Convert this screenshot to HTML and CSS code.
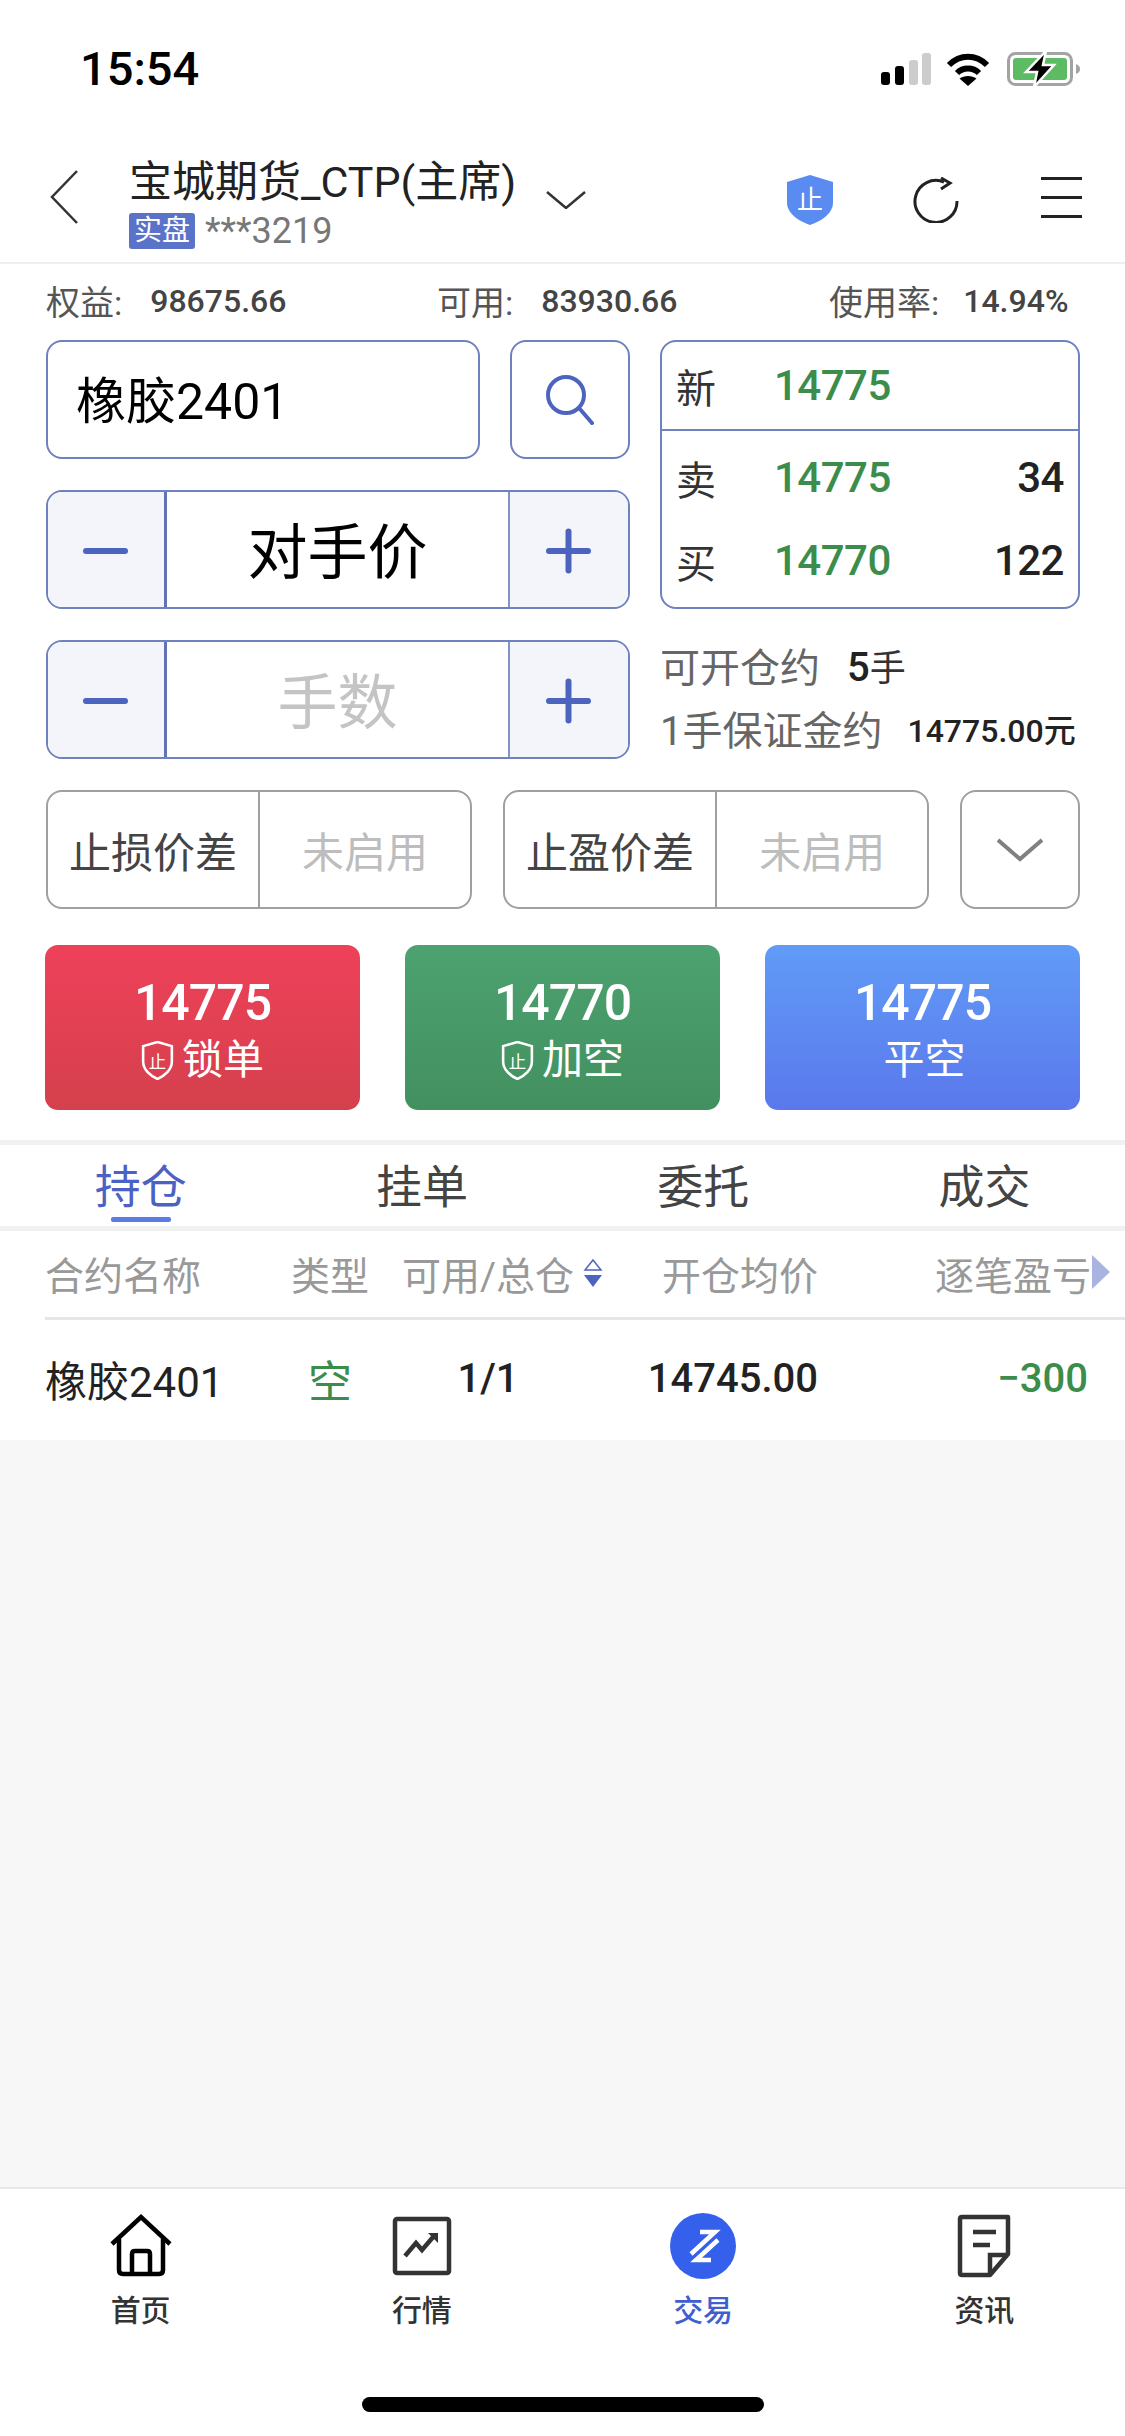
FILE: index.html
```html
<!DOCTYPE html>
<html>

<head>
  <meta name="viewport" content="width=device-width,initial-scale=1.0">
  <meta charset="utf-8">
  <title>交易</title>
  <link rel="stylesheet" href="styles.css">
</head>

<body>
  <div class="statusbar">
    <span class="time">15:54</span>
    <svg class="signal" viewBox="0 0 50 32"><rect x="0" y="19" width="9" height="13" rx="3" fill="#000"/><rect x="14" y="13" width="9" height="19" rx="3" fill="#000"/><rect x="28" y="7" width="9" height="25" rx="3" fill="#ccc"/><rect x="41" y="0" width="9" height="32" rx="3" fill="#ccc"/></svg>
    <svg class="wifi" viewBox="0 0 44 33"><path d="M3 12 C14 1 30 1 41 12" fill="none" stroke="#000" stroke-width="6"/><path d="M11 20 C17 14 27 14 33 20" fill="none" stroke="#000" stroke-width="6"/><path d="M22 33 L13.500 25.500 C18 22 26 22 30.500 25.500 Z" fill="#000"/></svg>
    <svg class="battery" viewBox="0 0 74 36"><rect x="1.500" y="2.500" width="63" height="31" rx="7" fill="#fff" stroke="#a3a3a3" stroke-width="3"/><rect x="6" y="7" width="54" height="22" rx="3" fill="#5dbb63"/><path d="M69 13 C72 14 73 16 73 18 C73 20 72 22 69 23 Z" fill="#a3a3a3"/><path d="M39 0 L19 21 L30 21 L27 36 L47 14 L36 14 Z" fill="#000" stroke="#fff" stroke-width="2.500"/></svg>
  </div>

  <div class="header">
    <svg class="back" viewBox="0 0 28 54"><path d="M27 1 L2 27 L27 53" fill="none" stroke="#333" stroke-width="2.500"/></svg>
    <div class="account">
      <div class="acc-name">宝城期货_CTP(主席)</div>
      <div class="acc-sub"><span class="acc-tag">实盘</span><span class="acc-no">***3219</span></div>
    </div>
    <svg class="acc-arrow" viewBox="0 0 40 18"><path d="M1 1 L20 17 L39 1" fill="none" stroke="#333" stroke-width="2.500"/></svg>
    <div class="head-icons">
      <svg class="ico-shield" viewBox="0 0 48 50"><path d="M24 0 L47 7 V28 C47 38 36 46 24 50 C12 46 1 38 1 28 V7 Z" fill="#5a8bf0"/><text x="24" y="34" text-anchor="middle" class="shield-txt">止</text></svg>
      <svg class="ico-refresh" viewBox="0 0 46 46"><path d="M31 5 A21 21 0 1 0 44 24" fill="none" stroke="#222" stroke-width="3"/><path d="M28 1 L37 6 L28 12" fill="none" stroke="#222" stroke-width="3"/></svg>
      <div class="ico-menu"><i></i><i></i><i></i></div>
    </div>
  </div>

  <div class="fund">
    <div class="fund-item"><span>权益:</span><b>98675.66</b></div>
    <div class="fund-item"><span>可用:</span><b>83930.66</b></div>
    <div class="fund-item"><span>使用率:</span><b class="near">14.94%</b></div>
  </div>

  <div class="panel">
    <div class="search-row">
      <div class="box contract">橡胶2401</div>
      <div class="box search-btn">
        <svg class="ico-search" viewBox="0 0 48 50"><circle cx="20" cy="20" r="18" fill="none" stroke="#4c64bd" stroke-width="4"/><path d="M33 33 L46 48" fill="none" stroke="#4c64bd" stroke-width="4" stroke-linecap="round"/></svg>
      </div>
    </div>

    <div class="box quote">
      <div class="q-top">
        <span class="q-lab">新</span><span class="q-price">14775</span>
      </div>
      <div class="q-bottom">
        <div class="q-row"><span class="q-lab">卖</span><span class="q-price">14775</span><span class="q-vol">34</span></div>
        <div class="q-row"><span class="q-lab">买</span><span class="q-price">14770</span><span class="q-vol">122</span></div>
      </div>
    </div>

    <div class="box stepper">
      <div class="step-btn"><i class="bar"></i></div>
      <div class="step-val">对手价</div>
      <div class="step-btn plus"><i class="bar"></i><i class="bar v"></i></div>
    </div>

    <div class="box stepper">
      <div class="step-btn"><i class="bar"></i></div>
      <div class="step-val empty">手数</div>
      <div class="step-btn plus"><i class="bar"></i><i class="bar v"></i></div>
    </div>

    <div class="open-info">
      <div class="open-line">可开仓约<b class="hand"><em>5</em>手</b></div>
      <div class="open-line">1手保证金约<b class="margin">14775.00元</b></div>
    </div>
  </div>

  <div class="stops">
    <div class="stop"><div class="stop-lab">止损价差</div><div class="stop-val">未启用</div></div>
    <div class="stop"><div class="stop-lab">止盈价差</div><div class="stop-val">未启用</div></div>
    <div class="stop more">
      <svg class="ico-down" viewBox="0 0 48 24"><path d="M2 2 L24 21 L46 2" fill="none" stroke="#808080" stroke-width="4"/></svg>
    </div>
  </div>

  <div class="actions">
    <div class="act red">
      <div class="act-price">14775</div>
      <div class="act-lab">
        <svg class="ico-stop" viewBox="0 0 32 38"><path d="M16 1 L30 5 V20 C30 28 23 34 16 37 C9 34 2 28 2 20 V5 Z" fill="none" stroke="#fff" stroke-width="2.500"/><text x="16" y="26" text-anchor="middle" class="stop-txt">止</text></svg>锁单
      </div>
    </div>
    <div class="act green">
      <div class="act-price">14770</div>
      <div class="act-lab">
        <svg class="ico-stop" viewBox="0 0 32 38"><path d="M16 1 L30 5 V20 C30 28 23 34 16 37 C9 34 2 28 2 20 V5 Z" fill="none" stroke="#fff" stroke-width="2.500"/><text x="16" y="26" text-anchor="middle" class="stop-txt">止</text></svg>加空
      </div>
    </div>
    <div class="act blue">
      <div class="act-price">14775</div>
      <div class="act-lab shifted">平空</div>
    </div>
  </div>

  <div class="tabs">
    <div class="tab on">持仓</div>
    <div class="tab">挂单</div>
    <div class="tab">委托</div>
    <div class="tab">成交</div>
  </div>

  <div class="table">
    <div class="t-head">
      <div class="c-name">合约名称</div>
      <div class="c-type">类型</div>
      <div class="c-avail">可用/总仓</div>
      <svg class="sort" viewBox="0 0 20 30"><path d="M10 2 L18 12 H2 Z" fill="none" stroke="#4c64bd" stroke-width="1.500"/><path d="M1 17 H19 L10 29 Z" fill="#4c64bd"/></svg>
      <div class="c-price">开仓均价</div>
      <div class="c-pnl">逐笔盈亏</div>
      <div class="t-arrow"></div>
    </div>
    <div class="t-row">
      <div class="c-name">橡胶2401</div>
      <div class="c-type short">空</div>
      <div class="c-avail num">1/1</div>
      <div class="c-gap"></div>
      <div class="c-price num">14745.00</div>
      <div class="c-pnl num short">−300</div>
    </div>
  </div>

  <div class="blank"></div>

  <div class="nav">
    <div class="nav-item">
      <svg class="nav-ico" viewBox="0 0 62 62"><path d="M2 29 L31 2 L60 29" fill="none" stroke="#000" stroke-width="4.500"/><path d="M9 24 V55 Q9 59 13 59 H49 Q53 59 53 55 V24" fill="none" stroke="#000" stroke-width="4.500"/><path d="M22 59 V39 Q22 36 25 36 H37 Q40 36 40 39 V59" fill="none" stroke="#000" stroke-width="4.500"/></svg>
      <span>首页</span>
    </div>
    <div class="nav-item">
      <svg class="nav-ico" viewBox="0 0 62 62"><rect x="4" y="4" width="54" height="54" rx="2" fill="none" stroke="#333" stroke-width="4.500"/><path d="M14 41 L25 28 L31 35 L43 21" fill="none" stroke="#333" stroke-width="4.500"/><path d="M37 18 H47 V28 Z" fill="#333"/></svg>
      <span>行情</span>
    </div>
    <div class="nav-item on">
      <svg class="nav-ico" viewBox="0 0 66 66"><circle cx="33" cy="33" r="33" fill="#3460ec"/><path d="M30 19 H45 L21 41" fill="none" stroke="#fff" stroke-width="4.500"/><path d="M48 27 L26 47 H41" fill="none" stroke="#fff" stroke-width="4.500"/></svg>
      <span>交易</span>
    </div>
    <div class="nav-item">
      <svg class="nav-ico" viewBox="0 0 62 62"><path d="M9 2 H55 V39 L37 60 H9 Q7 60 7 58 V4 Q7 2 9 2 Z" fill="none" stroke="#333" stroke-width="4.500" stroke-linejoin="round"/><path d="M55 40 H37 V60" fill="none" stroke="#333" stroke-width="4.500"/><path d="M20 17 H43 M20 30 H37" fill="none" stroke="#333" stroke-width="4.500"/></svg>
      <span>资讯</span>
    </div>
  </div>

  <div class="homebar"><i></i></div>
</body>

</html>
```

FILE: styles.css
```css
* {
  box-sizing: border-box;
}

body {
  margin: 0;
  width: 1125px;
  height: 2436px;
  overflow: hidden;
  background-color: #fff;
  color: #222;
  font-family: Roboto, "Noto Sans CJK SC", sans-serif;
}

i {
  display: block;
}

/* 状态栏 */
.statusbar {
  display: flex;
  align-items: center;
  height: 138px;
  padding: 0 44px 0 80px;
}

.time {
  font-size: 47px;
  font-weight: 500;
  color: #000;
  margin-right: auto;
  margin-top: -2px;
}

.signal {
  width: 50px;
  height: 32px;
}

.wifi {
  width: 44px;
  height: 33px;
  margin-left: 15px;
}

.battery {
  width: 74px;
  height: 36px;
  margin-left: 17px;
}

/* 标题栏 */
.header {
  display: flex;
  align-items: center;
  height: 126px;
  padding: 0 43px 0 50px;
  border-bottom: 2px solid #efefef;
}

.back {
  width: 28px;
  height: 54px;
  margin-right: 51px;
  margin-top: -6px;
}

.account {
  display: flex;
  flex-direction: column;
  margin-top: 6px;
}

.acc-name {
  font-size: 43px;
  line-height: 52px;
  color: #222;
}

.acc-sub {
  display: flex;
  align-items: center;
  margin-top: 3px;
}

.acc-tag {
  width: 66px;
  height: 36px;
  line-height: 36px;
  text-align: center;
  font-size: 28px;
  color: #fff;
  background-color: #5a72c8;
  border-radius: 3px;
}

.acc-no {
  margin-left: 10px;
  font-size: 36px;
  line-height: 40px;
  color: #777;
}

.acc-arrow {
  width: 40px;
  height: 18px;
  margin-left: 30px;
}

.head-icons {
  display: flex;
  align-items: center;
  margin-left: auto;
  gap: 79px;
}

.ico-shield {
  width: 48px;
  height: 50px;
}

.shield-txt {
  font-size: 26px;
  fill: #fff;
}

.ico-refresh {
  width: 46px;
  height: 46px;
}

.ico-menu {
  display: flex;
  flex-direction: column;
  justify-content: space-between;
  width: 41px;
  height: 41px;
  margin-left: 3px;
  margin-top: -6px;
}

.ico-menu i {
  height: 3px;
  background-color: #222;
}

/* 资金 */
.fund {
  display: grid;
  grid-template-columns: 391px 392px auto;
  height: 76px;
  padding: 0 46px 3px;
  align-items: center;
}

.fund-item {
  display: flex;
  align-items: center;
  font-size: 34px;
  color: #555;
}

.fund-item b {
  margin-left: 28px;
  font-size: 32px;
  font-weight: 500;
  color: #444;
}

.fund-item b.near {
  margin-left: 24px;
}

/* 下单区 */
.panel {
  display: grid;
  grid-template-columns: 584px 420px;
  grid-auto-rows: 119px;
  column-gap: 30px;
  row-gap: 31px;
  padding: 0 46px;
}

.box {
  border: 2px solid #6f81bf;
  border-radius: 16px;
  overflow: hidden;
}

.search-row {
  display: flex;
  gap: 30px;
}

.contract {
  flex: 1;
  display: flex;
  align-items: center;
  padding: 0 0 5px 28px;
  font-size: 50px;
  color: #000;
}

.search-btn {
  display: flex;
  align-items: center;
  justify-content: center;
  width: 120px;
}

.ico-search {
  width: 48px;
  height: 50px;
}

.quote {
  grid-row: span 2;
  display: flex;
  flex-direction: column;
}

.q-top {
  display: flex;
  align-items: center;
  height: 89px;
  padding: 0 14px;
  border-bottom: 2px solid #6f81bf;
}

.q-bottom {
  flex: 1;
  padding: 5px 0 0;
}

.q-row {
  display: flex;
  align-items: center;
  height: 83px;
  padding: 0 14px;
}

.q-lab {
  width: 98px;
  font-size: 40px;
  color: #333;
}

.q-price {
  width: 114px;
  font-size: 42px;
  font-weight: 500;
  letter-spacing: -0.500px;
  color: #3c8c4b;
  white-space: nowrap;
}

.q-vol {
  margin-left: auto;
  font-size: 42px;
  font-weight: 500;
  letter-spacing: -0.500px;
  color: #222;
}

.stepper {
  display: flex;
}

.step-btn {
  position: relative;
  width: 119px;
  background-color: #f3f5fb;
  border-right: 3px solid #5f73b8;
}

.step-btn.plus {
  width: 120px;
  border-right: 0;
  border-left: 2px solid #8493c6;
}

.bar {
  position: absolute;
  left: 35px;
  top: 56px;
  width: 45px;
  height: 6px;
  border-radius: 3px;
  background-color: #4c64bd;
}

.plus .bar {
  left: 36px;
}

.plus .bar.v {
  transform: rotate(90deg);
}

.step-val {
  flex: 1;
  display: flex;
  align-items: center;
  justify-content: center;
  padding-bottom: 4px;
  font-size: 60px;
  color: #000;
}

.step-val.empty {
  color: #c4c4c4;
}

.open-info {
  display: flex;
  flex-direction: column;
  margin-top: -6px;
}

.open-line {
  display: flex;
  align-items: center;
  height: 67px;
  font-size: 40px;
  color: #666;
}

.hand {
  margin-left: 27px;
  font-size: 36px;
  font-weight: 400;
  color: #333;
}

.hand em {
  font-style: normal;
  font-size: 40px;
  font-weight: 500;
  color: #222;
}

.margin {
  margin-left: 25px;
  font-size: 32px;
  font-weight: 500;
  color: #222;
  white-space: nowrap;
}

/* 止损止盈 */
.stops {
  display: flex;
  gap: 31px;
  height: 119px;
  margin-top: 31px;
  padding: 0 45px 0 46px;
}

.stop {
  display: flex;
  width: 427px;
  border: 2px solid #a0a0a0;
  border-radius: 16px;
}

.stop-lab {
  display: flex;
  align-items: center;
  justify-content: center;
  width: 212px;
  border-right: 2px solid #a0a0a0;
  font-size: 42px;
  color: #444;
}

.stop-val {
  flex: 1;
  display: flex;
  align-items: center;
  justify-content: center;
  font-size: 42px;
  color: #bdbdbd;
}

.stop.more {
  align-items: center;
  justify-content: center;
  width: 120px;
}

.ico-down {
  width: 48px;
  height: 24px;
}

/* 买卖按钮 */
.actions {
  display: flex;
  gap: 45px;
  margin-top: 36px;
  padding: 0 45px;
}

.act {
  display: flex;
  flex-direction: column;
  align-items: center;
  width: 315px;
  height: 165px;
  padding-top: 29px;
  border-radius: 13px;
  color: #fff;
}

.act.red {
  background: linear-gradient(#ee4159, #d5404d);
}

.act.green {
  background: linear-gradient(#4ca270, #43905f);
}

.act.blue {
  background: linear-gradient(#619bf7, #5a78ec);
}

.act-price {
  font-size: 50px;
  line-height: 58px;
  font-weight: 500;
  letter-spacing: -1px;
}

.act-lab {
  display: flex;
  align-items: center;
  font-size: 41px;
  line-height: 56px;
}

.act-lab.shifted {
  margin-left: 4px;
}

.ico-stop {
  width: 33px;
  height: 39px;
  margin-right: 8px;
}

.stop-txt {
  font-size: 17px;
  fill: #fff;
}

/* 持仓tab */
.tabs {
  display: flex;
  height: 91px;
  margin-top: 30px;
  border-top: 5px solid #f1f1f1;
  border-bottom: 5px solid #f1f1f1;
}

.tab {
  position: relative;
  width: 281.500px;
  height: 81px;
  line-height: 84px;
  text-align: center;
  font-size: 46px;
  color: #444;
}

.tab.on {
  color: #4a62c4;
}

.tab.on::after {
  content: "";
  position: absolute;
  left: 111px;
  bottom: 4px;
  width: 60px;
  height: 5px;
  border-radius: 2px;
  background-color: #5b7ce8;
}

/* 持仓表 */
.table {
  padding-left: 45px;
}

.t-head,
.t-row {
  position: relative;
  display: flex;
  align-items: center;
}

.t-head {
  height: 89px;
  padding-bottom: 2px;
  border-bottom: 3px solid #e6e6e6;
  font-size: 39px;
  color: #999;
  overflow: hidden;
}

.t-row {
  height: 120px;
  padding-bottom: 3px;
  font-size: 42px;
  color: #222;
}

.c-name {
  width: 246px;
  flex: none;
}

.c-type {
  width: 78px;
  flex: none;
  text-align: center;
}

.c-avail {
  width: 172px;
  flex: none;
  margin-left: 33px;
  text-align: center;
  white-space: nowrap;
}

.sort {
  width: 20px;
  height: 30px;
  flex: none;
  margin-left: 9px;
}

.c-gap {
  width: 29px;
  flex: none;
}

.c-price {
  width: 215px;
  flex: none;
  text-align: right;
  white-space: nowrap;
}

.t-head .c-pnl {
  margin-left: 117px;
  flex: none;
  white-space: nowrap;
}

.t-row .c-pnl {
  width: 270px;
  flex: none;
  text-align: right;
}

.t-row .c-type {
  font-size: 44px;
}

.t-row .num {
  font-weight: 500;
  font-size: 40px;
}

.short {
  color: #3c8c4b;
}

.t-arrow {
  position: absolute;
  right: 15px;
  top: 24px;
  border-left: 18px solid #a9b4e0;
  border-top: 17px solid transparent;
  border-bottom: 17px solid transparent;
}

/* 底部 */
.blank {
  height: 747px;
  background-color: #f7f7f7;
}

.nav {
  display: flex;
  height: 162px;
  border-top: 2px solid #e8e8e8;
  padding-top: 24px;
}

.nav-item {
  display: flex;
  flex-direction: column;
  align-items: center;
  width: 281.500px;
  font-size: 30px;
  font-weight: 500;
  color: #333;
}

.nav-ico {
  width: 62px;
  height: 66px;
}

.nav-item.on {
  color: #3f5fd0;
}

.nav-item.on .nav-ico {
  width: 66px;
}

.nav-item span {
  margin-top: 12px;
  line-height: 40px;
}

.homebar {
  display: flex;
  justify-content: center;
  padding-top: 48px;
}

.homebar i {
  width: 402px;
  height: 15px;
  border-radius: 8px;
  background-color: #000;
}
```
